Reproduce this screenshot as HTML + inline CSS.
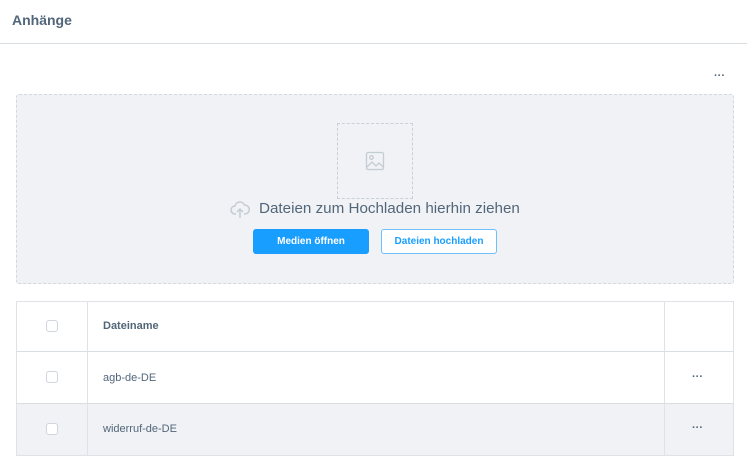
<!DOCTYPE html>
<html><head><meta charset="utf-8"><style>
*{box-sizing:border-box;margin:0;padding:0}
body{width:747px;height:468px;background:#fff;font-family:"Liberation Sans",sans-serif;color:#52667a;position:relative;overflow:hidden}
.abs{position:absolute}
.hdr{left:12px;top:12px;font-size:14px;font-weight:bold;color:#52667a}
.line{left:0;top:43px;width:747px;height:1px;background:#d9dee3}
.dots{font-size:11px;color:#52667a;font-weight:bold;letter-spacing:0px}
.drop{left:16px;top:94px;width:718px;height:190px;background:#f0f2f5;border:1px dashed #d1d9e0;border-radius:3px}
.prev{left:337px;top:123px;width:76px;height:76px;border:1px dashed #c8d0d8}
.dtext{left:259px;top:200px;font-size:15.2px;color:#52667a}
.btn{top:229px;height:25px;border-radius:3px;font-size:10px;font-weight:bold;text-align:center;line-height:25px}
.b1{left:253px;width:116px;background:#189eff;color:#fff}
.b2{left:381px;width:116px;border:1px solid #6fc0f8;color:#189eff;background:#fff;line-height:23px}
.tbl{left:16px;top:301px;width:718px;height:155px;border:1px solid #dfe3e8}
.row2{left:17px;top:403px;width:716px;height:52px;background:#f0f2f5}
.hl{left:17px;height:1px;width:716px;background:#d9dee3}
.vl{top:302px;width:1px;height:153px;background:#dfe3e8}
.cb{left:46px;width:12px;height:12px;border:1px solid #cfd6de;border-radius:3px;background:#fff}
.cell{left:103px;font-size:11px;color:#52667a}
</style></head><body>
<div class="abs hdr">Anhänge</div>
<div class="abs line"></div>
<div class="abs dots" style="left:714px;top:70px">···</div>
<div class="abs drop"></div>
<div class="abs prev"></div>
<svg class="abs" style="left:365px;top:151px" width="20" height="20" viewBox="0 0 20 20" fill="none" stroke="#c4ccd4" stroke-width="1.3"><rect x="1.5" y="1.5" width="17" height="17" rx="1.5"/><circle cx="6.5" cy="6.5" r="1.8"/><path d="M2 16l5-5 4 4 3-3 4 4"/></svg>
<svg class="abs" style="left:230px;top:201px" width="20" height="18" viewBox="0 0 20 18" fill="none" stroke="#c4ccd4" stroke-width="1.5"><path d="M6 13H5a4 4 0 0 1 0-8 5 5 0 0 1 9.5-1A4 4 0 0 1 15 13h-1"/><path d="M10 17V8M7 11l3-3 3 3"/></svg>
<div class="abs dtext">Dateien zum Hochladen hierhin ziehen</div>
<div class="abs btn b1">Medien öffnen</div>
<div class="abs btn b2">Dateien hochladen</div>
<div class="abs tbl"></div>
<div class="abs row2"></div>
<div class="abs hl" style="top:351px"></div>
<div class="abs hl" style="top:403px"></div>
<div class="abs vl" style="left:87px"></div>
<div class="abs vl" style="left:664px"></div>
<div class="abs cb" style="top:320px"></div>
<div class="abs cb" style="top:371px"></div>
<div class="abs cb" style="top:423px"></div>
<div class="abs cell" style="top:320px;font-weight:bold">Dateiname</div>
<div class="abs cell" style="top:372px">agb-de-DE</div>
<div class="abs cell" style="top:423px">widerruf-de-DE</div>
<div class="abs dots" style="left:692px;top:371px">···</div>
<div class="abs dots" style="left:692px;top:422px">···</div>
</body></html>
